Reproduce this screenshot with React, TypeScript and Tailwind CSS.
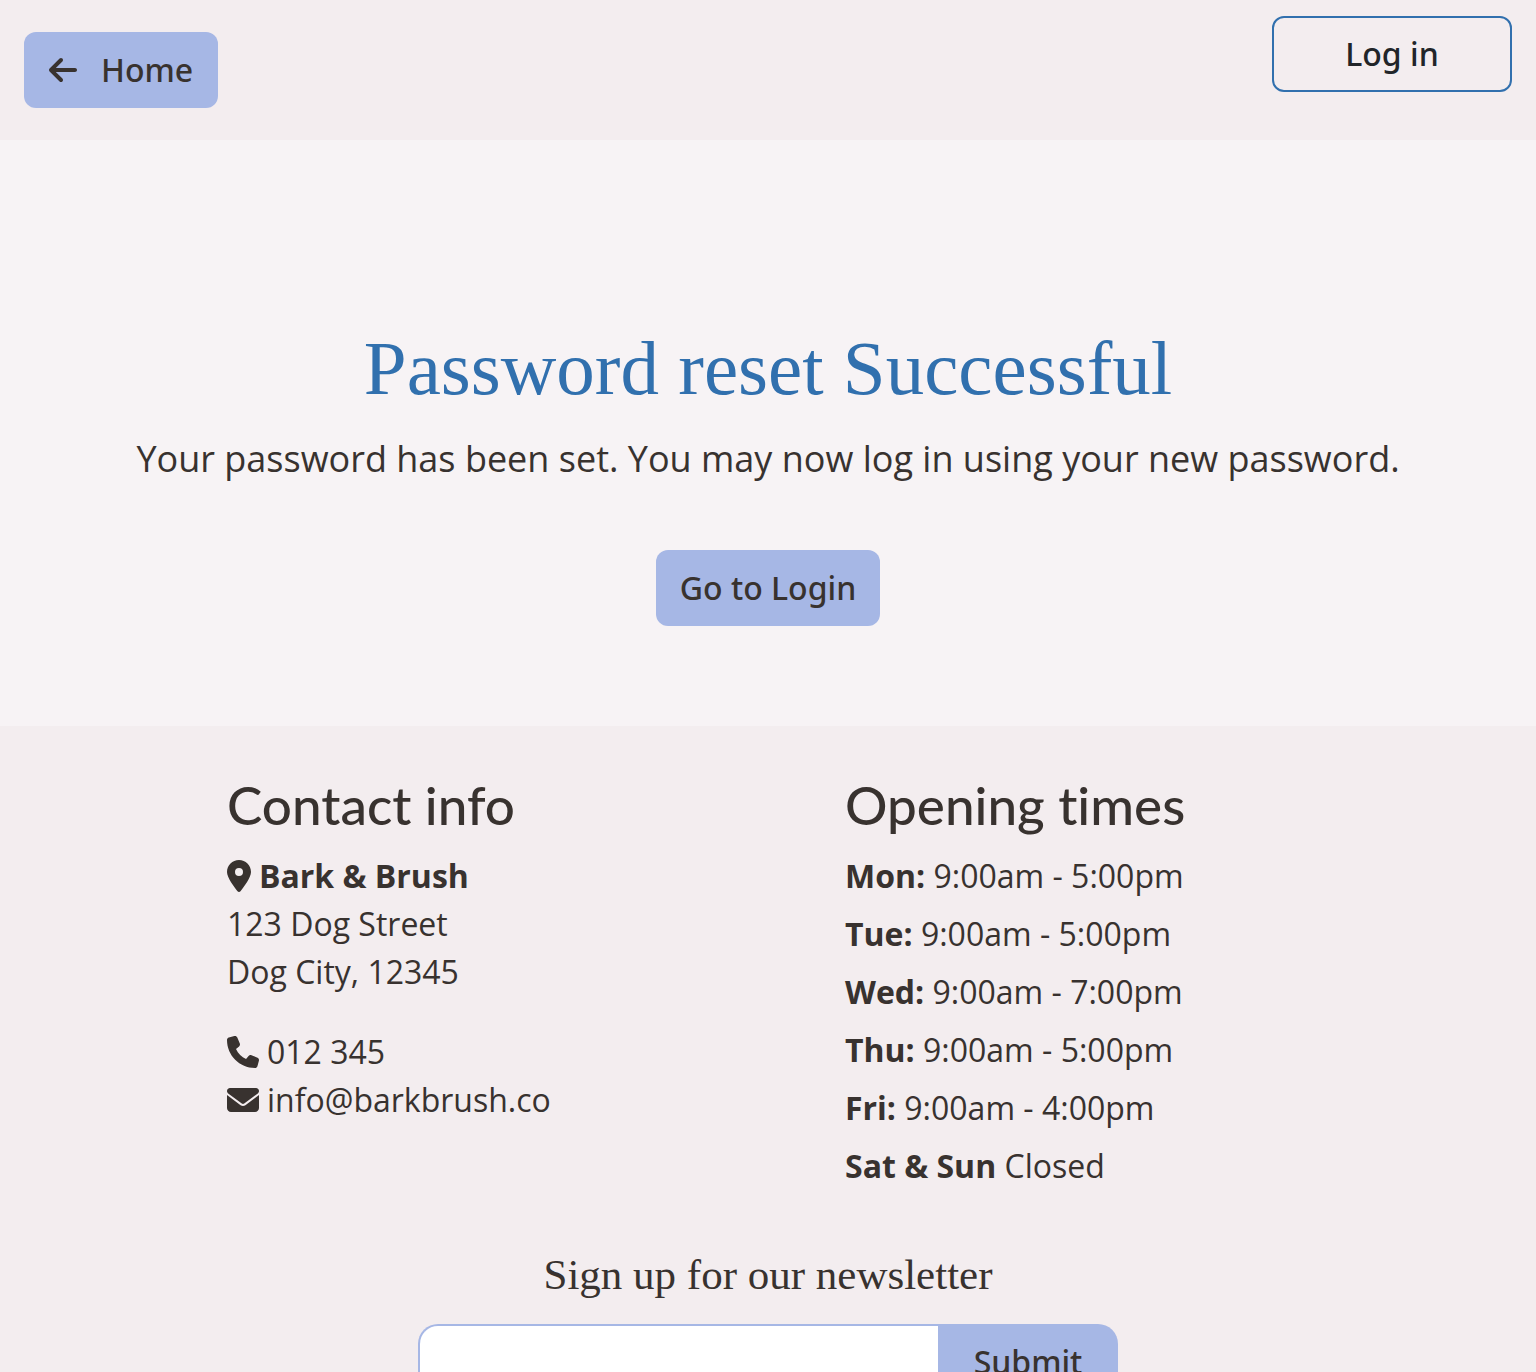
import { FaArrowLeft, FaLocationDot, FaPhone, FaEnvelope } from "react-icons/fa6";

const hours = [
  ["Mon:", "9:00am - 5:00pm"],
  ["Tue:", "9:00am - 5:00pm"],
  ["Wed:", "9:00am - 7:00pm"],
  ["Thu:", "9:00am - 5:00pm"],
  ["Fri:", "9:00am - 4:00pm"],
  ["Sat & Sun", "Closed"],
];

export default function App() {
  return (
    <div className="min-h-screen bg-[#f3edef] font-['Open_Sans',sans-serif] text-[32px] leading-[48px] text-[#38322f]">
      <header className="flex items-start justify-between px-6 pt-4 pb-8">
        <a href="#home" className="mt-4 flex h-19 items-center gap-6 rounded-xl bg-[#a6b7e5] px-[25px] font-['Noto_Sans',sans-serif] font-medium">
          <FaArrowLeft className="h-8 w-7" />
          Home
        </a>
        <a href="#login" className="flex h-19 w-60 items-center justify-center rounded-xl border-2 border-[#3170ae] font-['Noto_Sans',sans-serif] font-medium text-[#212529]">
          Log in
        </a>
      </header>
      <main className="flex flex-col items-center bg-[#f7f3f5] px-6 pt-46 pb-25 text-center">
        <h1 className="font-['Liberation_Serif',serif] text-[77px] leading-[88px] text-[#3170ae]">Password reset Successful</h1>
        <p className="mt-5 text-[36px] leading-[54px]">Your password has been set. You may now log in using your new password.</p>
        <a href="#login" className="mt-16 flex h-19 items-center rounded-xl bg-[#a6b7e5] px-6 font-['Noto_Sans',sans-serif] font-medium">
          Go to Login
        </a>
      </main>
      <footer className="pt-12">
        <div className="grid grid-cols-2 gap-x-[154px] px-[227px]">
          <section>
            <h2 className="font-['Lato',sans-serif] text-[53px] leading-[62px] font-medium [font-variant-ligatures:none]">Contact info</h2>
            <address className="mt-4 not-italic">
              <div className="flex items-center gap-2"><FaLocationDot className="h-8 w-6" /><strong>Bark &amp; Brush</strong></div>
              <div>123 Dog Street</div>
              <div>Dog City, 12345</div>
              <div className="mt-8 flex items-center gap-2"><FaPhone /><a href="tel:012345">012 345</a></div>
              <div className="flex items-center gap-2"><FaEnvelope /><a href="mailto:info@barkbrush.co">info@barkbrush.co</a></div>
            </address>
          </section>
          <section>
            <h2 className="font-['Lato',sans-serif] text-[53px] leading-[62px] font-medium [font-variant-ligatures:none]">Opening times</h2>
            <ul className="mt-4 space-y-[10px]">
              {hours.map(([day, time]) => (
                <li key={day}><strong>{day}</strong> {time}</li>
              ))}
            </ul>
          </section>
        </div>
        <form className="mt-14 flex flex-col items-center">
          <label htmlFor="email" className="font-['Liberation_Serif',serif] text-[43px] leading-[58px]">Sign up for our newsletter</label>
          <div className="mt-5 flex h-19 w-full max-w-[700px]">
            <input id="email" type="email" className="min-w-0 flex-1 rounded-l-[20px] border-2 border-r-0 border-[#a6b7e5] bg-white px-6" />
            <button type="button" className="w-45 rounded-r-[20px] bg-[#a6b7e5] font-['Noto_Sans',sans-serif] font-medium">Submit</button>
          </div>
        </form>
      </footer>
    </div>
  );
}
